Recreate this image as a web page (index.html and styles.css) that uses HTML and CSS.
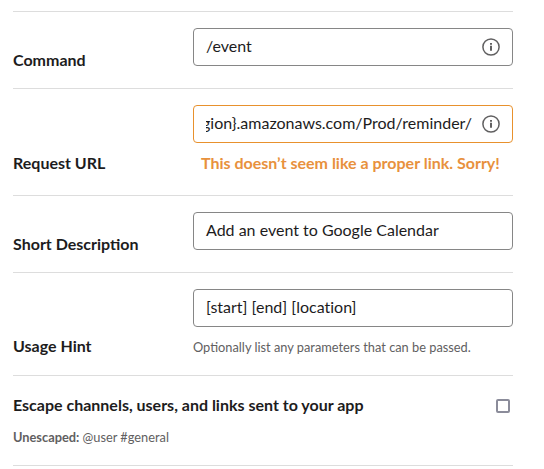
FILE: index.html
```html
<!DOCTYPE html>
<html lang="en">
<head>
<meta charset="utf-8">
<title>Edit Command</title>
<link rel="stylesheet" href="styles.css">
</head>
<body>
<form class="form">
  <section class="row row-command">
    <label class="label">Command</label>
    <div class="control">
      <div class="input"><span class="value">/event</span>
        <svg class="info" viewBox="0 0 18 18"><circle cx="9" cy="9" r="8.1"/><path class="stem" d="M9 7.7v5.1"/><path class="dot" d="M9 4.9v1.8"/></svg>
      </div>
    </div>
  </section>
  <section class="row row-url">
    <label class="label">Request URL</label>
    <div class="control">
      <div class="input input-error"><span class="value value-end"><span>{region}.amazonaws.com/Prod/reminder/</span></span>
        <svg class="info" viewBox="0 0 18 18"><circle cx="9" cy="9" r="8.1"/><path class="stem" d="M9 7.7v5.1"/><path class="dot" d="M9 4.9v1.8"/></svg>
      </div>
      <p class="error">This doesn’t seem like a proper link. Sorry!</p>
    </div>
  </section>
  <section class="row row-description">
    <label class="label">Short Description</label>
    <div class="control"><div class="input"><span class="value">Add an event to Google Calendar</span></div></div>
  </section>
  <section class="row row-hint">
    <label class="label">Usage Hint</label>
    <div class="control">
      <div class="input"><span class="value">[start] [end] [location]</span></div>
      <p class="hint">Optionally list any parameters that can be passed.</p>
    </div>
  </section>
  <section class="row row-escape">
    <div class="escape-text">
      <div class="label">Escape channels, users, and links sent to your app</div>
      <p class="example"><b>Unescaped:</b> @user #general</p>
    </div>
    <span class="checkbox" role="checkbox" aria-checked="false"></span>
  </section>
</form>
</body>
</html>
```
FILE: styles.css
```css
* { box-sizing: border-box; }
body { margin: 0; background: #fff; color: #1d1c1d; font: 16px/22px Lato, sans-serif; }
p { margin: 0; }
.form { width: 500px; margin: 11px 0 0 13px; border-bottom: 1px solid #ddd; }
.row { display: flex; border-top: 1px solid #ddd; padding-top: 16px; }
.row-command, .row-description { height: 77px; }
.row-url { height: 107px; }
.row-hint { height: 103px; }
.row-escape { height: 90px; padding-top: 18px; justify-content: space-between; }
.label { font-weight: 700; }
.row > .label { width: 180px; flex: none; align-self: flex-end; }
.row-command .label, .row-description .label { margin-bottom: 17px; }
.row-url .label { margin-bottom: 21px; }
.row-hint .label { margin-bottom: 18px; }
.control { width: 320px; }
.input { display: flex; align-items: center; height: 38px; border: 1px solid #868686; border-radius: 4px; padding: 0 12px; }
.input-error { border-color: #e8912d; }
.value { flex: 1; white-space: nowrap; padding-bottom: 2px; font-variant-ligatures: none; }
.value-end { display: flex; justify-content: flex-end; overflow: hidden; flex: none; width: 266px; }
.info { width: 18px; height: 18px; flex: none; margin-left: auto; fill: none; stroke: #616061; stroke-width: 1.5; }
.info .stem, .info .dot { stroke-width: 2; }
.error { margin: 9px 0 0 8px; color: #e8913d; font-weight: 700; white-space: nowrap; }
.hint { margin-top: 9px; font-size: 12.8px; color: #616061; }
.example { margin-top: 10px; font-size: 12.8px; color: #616061; }
.checkbox { width: 14px; height: 14px; margin: 5px 3px 0 0; border: 2px solid #8b8c9a; border-radius: 2px; }
```
